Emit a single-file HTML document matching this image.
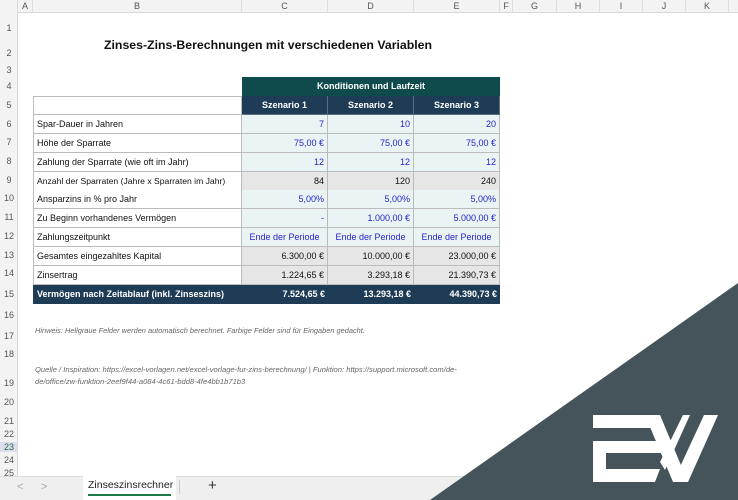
<!DOCTYPE html>
<html><head><meta charset="utf-8"><style>
*{margin:0;padding:0;box-sizing:border-box}
body{width:738px;height:500px;overflow:hidden;background:#fff;font-family:"Liberation Sans",sans-serif;position:relative}
.a{position:absolute}
.ch{position:absolute;top:0;height:13px;font-size:9px;color:#555;text-align:center;line-height:13px;border-right:1px solid #ddd}
.rh{position:absolute;left:0;width:18px;font-size:9px;color:#555;text-align:center}
.c{position:absolute;height:19px;font-size:9px;line-height:18px;padding:0 3px;white-space:nowrap;border-right:1px solid #bbb;border-bottom:1px solid #bbb;overflow:hidden}
.l{background:#fff;color:#111;border-left:1px solid #bbb}
.in{background:#ebf4f4;color:#2424c8;text-align:right}
.gr{background:#e6e6e6;color:#111;text-align:right}
.ct{text-align:center}
</style></head><body>
<div class="a" style="left:0;top:0;width:738px;height:13px;background:#f3f3f3;border-bottom:1px solid #d8d8d8"></div>
<div class="a" style="left:0;top:0;width:18px;height:476px;background:#f3f3f3;border-right:1px solid #d8d8d8"></div>
<div class="ch" style="left:18px;width:15px">A</div>
<div class="ch" style="left:33px;width:209px">B</div>
<div class="ch" style="left:242px;width:86px">C</div>
<div class="ch" style="left:328px;width:86px">D</div>
<div class="ch" style="left:414px;width:86px">E</div>
<div class="ch" style="left:500px;width:13px">F</div>
<div class="ch" style="left:513px;width:44px">G</div>
<div class="ch" style="left:557px;width:43px">H</div>
<div class="ch" style="left:600px;width:43px">I</div>
<div class="ch" style="left:643px;width:43px">J</div>
<div class="ch" style="left:686px;width:43px">K</div>
<div class="rh" style="top:23px">1</div><div class="rh" style="top:48px">2</div><div class="rh" style="top:65px">3</div><div class="rh" style="top:81px">4</div><div class="rh" style="top:100px">5</div><div class="rh" style="top:119px">6</div><div class="rh" style="top:137px">7</div><div class="rh" style="top:156px">8</div><div class="rh" style="top:175px">9</div><div class="rh" style="top:193px">10</div><div class="rh" style="top:212px">11</div><div class="rh" style="top:231px">12</div><div class="rh" style="top:250px">13</div><div class="rh" style="top:268px">14</div><div class="rh" style="top:289px">15</div><div class="rh" style="top:310px">16</div><div class="rh" style="top:331px">17</div><div class="rh" style="top:349px">18</div><div class="rh" style="top:378px">19</div><div class="rh" style="top:397px">20</div><div class="rh" style="top:416px">21</div><div class="rh" style="top:429px">22</div><div class="rh" style="top:442px;color:#1e6e3e;background:#dde;">23</div><div class="rh" style="top:455px">24</div><div class="rh" style="top:468px">25</div>
<div class="a" style="left:104px;top:38px;font-size:12.3px;font-weight:bold;color:#111">Zinses-Zins-Berechnungen mit verschiedenen Variablen</div>
<div class="a" style="left:242px;top:77px;width:258px;height:19px;background:#0f4a4c;color:#fff;font-size:9px;font-weight:bold;text-align:center;line-height:19px">Konditionen und Laufzeit</div>
<div class="c ct" style="left:242px;top:96px;width:86px;background:#1e3c56;color:#fff;font-weight:bold;border-color:#5a6e80">Szenario 1</div>
<div class="c ct" style="left:328px;top:96px;width:86px;background:#1e3c56;color:#fff;font-weight:bold;border-color:#5a6e80">Szenario 2</div>
<div class="c ct" style="left:414px;top:96px;width:86px;background:#1e3c56;color:#fff;font-weight:bold;border-color:#5a6e80">Szenario 3</div>
<div class="c l" style="left:33px;top:96px;width:209px;border-top:1px solid #bbb"></div>

<div class="c l" style="left:33px;top:115px;width:209px">Spar-Dauer in Jahren</div><div class="c in" style="left:242px;top:115px;width:86px">7</div><div class="c in" style="left:328px;top:115px;width:86px">10</div><div class="c in" style="left:414px;top:115px;width:86px">20</div>
<div class="c l" style="left:33px;top:134px;width:209px">Höhe der Sparrate</div><div class="c in" style="left:242px;top:134px;width:86px">75,00 €</div><div class="c in" style="left:328px;top:134px;width:86px">75,00 €</div><div class="c in" style="left:414px;top:134px;width:86px">75,00 €</div>
<div class="c l" style="left:33px;top:153px;width:209px">Zahlung der Sparrate (wie oft im Jahr)</div><div class="c in" style="left:242px;top:153px;width:86px">12</div><div class="c in" style="left:328px;top:153px;width:86px">12</div><div class="c in" style="left:414px;top:153px;width:86px">12</div>
<div class="c l" style="left:33px;top:172px;width:209px;font-size:8.6px">Anzahl der Sparraten (Jahre x Sparraten im Jahr)</div><div class="c gr" style="left:242px;top:172px;width:86px">84</div><div class="c gr" style="left:328px;top:172px;width:86px">120</div><div class="c gr" style="left:414px;top:172px;width:86px">240</div>
<div class="c l" style="left:33px;top:190px;width:209px">Ansparzins in % pro Jahr</div><div class="c in" style="left:242px;top:190px;width:86px">5,00%</div><div class="c in" style="left:328px;top:190px;width:86px">5,00%</div><div class="c in" style="left:414px;top:190px;width:86px">5,00%</div>
<div class="c l" style="left:33px;top:209px;width:209px">Zu Beginn vorhandenes Vermögen</div><div class="c in" style="left:242px;top:209px;width:86px">-</div><div class="c in" style="left:328px;top:209px;width:86px">1.000,00 €</div><div class="c in" style="left:414px;top:209px;width:86px">5.000,00 €</div>
<div class="c l" style="left:33px;top:228px;width:209px">Zahlungszeitpunkt</div><div class="c in ct" style="left:242px;top:228px;width:86px">Ende der Periode</div><div class="c in ct" style="left:328px;top:228px;width:86px">Ende der Periode</div><div class="c in ct" style="left:414px;top:228px;width:86px">Ende der Periode</div>
<div class="c l" style="left:33px;top:247px;width:209px">Gesamtes eingezahltes Kapital</div><div class="c gr" style="left:242px;top:247px;width:86px">6.300,00 €</div><div class="c gr" style="left:328px;top:247px;width:86px">10.000,00 €</div><div class="c gr" style="left:414px;top:247px;width:86px">23.000,00 €</div>
<div class="c l" style="left:33px;top:266px;width:209px">Zinsertrag</div><div class="c gr" style="left:242px;top:266px;width:86px">1.224,65 €</div><div class="c gr" style="left:328px;top:266px;width:86px">3.293,18 €</div><div class="c gr" style="left:414px;top:266px;width:86px">21.390,73 €</div>
<div class="a" style="left:33px;top:285px;width:467px;height:19px;background:#1e3c56;color:#fff;font-weight:bold;font-size:9px;line-height:19px">
<span class="a" style="left:4px">Vermögen nach Zeitablauf (inkl. Zinseszins)</span>
<span class="a" style="right:175px">7.524,65 €</span><span class="a" style="right:89px">13.293,18 €</span><span class="a" style="right:3px">44.390,73 €</span></div>
<div class="a" style="left:35px;top:326px;font-size:7.4px;font-style:italic;color:#666">Hinweis: Hellgraue Felder werden automatisch berechnet. Farbige Felder sind für Eingaben gedacht.</div>
<div class="a" style="left:35px;top:364px;font-size:7.6px;font-style:italic;color:#666;line-height:12px">Quelle / Inspiration: https://excel-vorlagen.net/excel-vorlage-fur-zins-berechnung/ | Funktion: https://support.microsoft.com/de-<br>de/office/zw-funktion-2eef9f44-a084-4c61-bdd8-4fe4bb1b71b3</div>
<div class="a" style="left:0;top:476px;width:738px;height:24px;background:#efefef;border-top:1px solid #ddd"></div>
<div class="a" style="left:17px;top:481px;font-size:11px;color:#aaa">&lt;</div>
<div class="a" style="left:41px;top:481px;font-size:11px;color:#aaa">&gt;</div>
<div class="a" style="left:83px;top:476px;width:93px;height:24px;background:#fff"></div>
<div class="a" style="left:88px;top:479px;font-size:10.5px;color:#222">Zinseszinsrechner</div>
<div class="a" style="left:88px;top:494px;width:83px;height:2px;background:#1e7a46"></div>
<div class="a" style="left:179px;top:480px;width:1px;height:14px;background:#ccc"></div>
<div class="a" style="left:208px;top:477px;font-size:15px;color:#333">+</div>
<svg class="a" style="left:0;top:0" width="738" height="500">
<polygon points="738,283 738,500 430,500" fill="#44545a"/>
<g fill="#fff">
<polygon points="593,415 652,415 659,428 593,428"/>
<polygon points="593,441 657,441 662,453 606,453 606,469 660,469 655,482 593,482"/>
<polygon points="645,415 660,415 688,482 673,482"/>
<polygon points="704,415 718,415 688,482 673,482"/>
<polygon points="683,415 690,415 665,470 660,462"/>
</g>
</svg>
</body></html>
